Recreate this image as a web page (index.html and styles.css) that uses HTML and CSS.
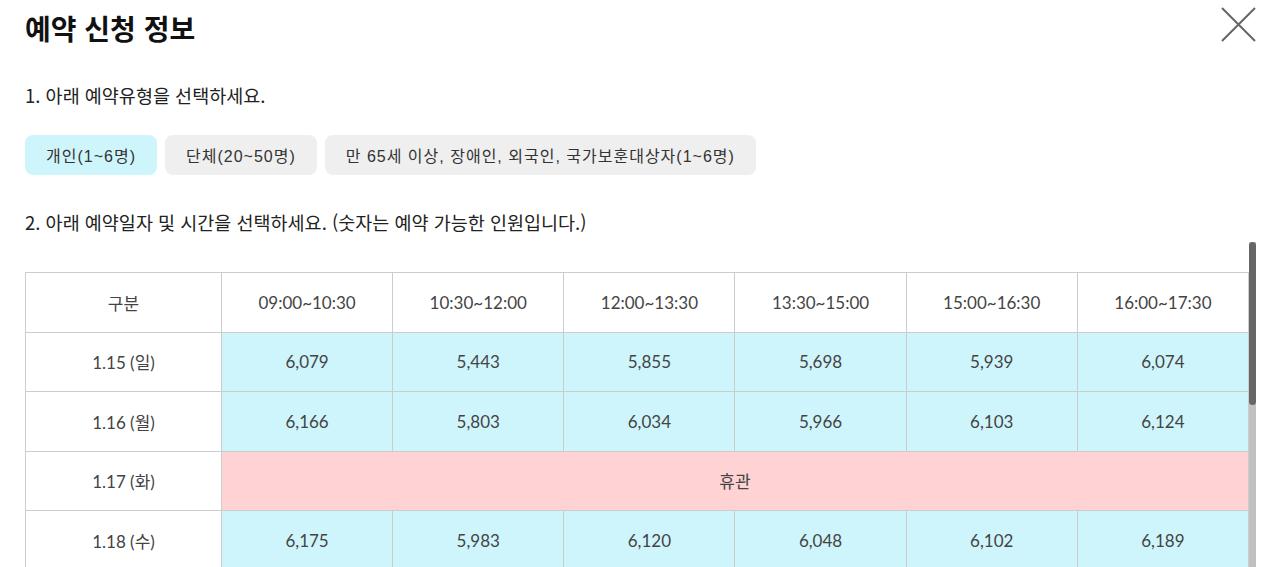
FILE: index.html
```html
<!DOCTYPE html>
<html lang="ko">
<head>
    <meta charset="UTF-8" />
    <meta name="viewport" content="width=device-width, initial-scale=1" />
    <title>예약 신청 정보</title>
    <link rel="stylesheet" href="styles.css">
</head>
<body>
    <div class="modal">
        <div class="modal-header">
            <h1>예약 신청 정보</h1>
            <button class="close" aria-label="닫기">
                <svg width="35" height="35" viewBox="0 0 35 35">
                    <path d="M1 1 L34 34 M34 1 L1 34" stroke="#666" stroke-width="2" fill="none" />
                </svg>
            </button>
        </div>

        <p class="step step-1">1. 아래 예약유형을 선택하세요.</p>
        <div class="type-list">
            <button class="type active">개인(1~6명)</button>
            <button class="type">단체(20~50명)</button>
            <button class="type">만 65세 이상, 장애인, 외국인, 국가보훈대상자(1~6명)</button>
        </div>

        <p class="step step-2">2. 아래 예약일자 및 시간을 선택하세요. (숫자는 예약 가능한 인원입니다.)</p>

        <div class="schedule">
            <div class="schedule-body">
                <table>
                    <colgroup>
                        <col class="col-date" />
                        <col /><col /><col /><col /><col /><col />
                    </colgroup>
                    <thead>
                        <tr>
                            <th>구분</th>
                            <th>09:00~10:30</th>
                            <th>10:30~12:00</th>
                            <th>12:00~13:30</th>
                            <th>13:30~15:00</th>
                            <th>15:00~16:30</th>
                            <th>16:00~17:30</th>
                        </tr>
                    </thead>
                    <tbody>
                        <tr>
                            <td class="date">1.15 (일)</td>
                            <td class="open">6,079</td><td class="open">5,443</td><td class="open">5,855</td>
                            <td class="open">5,698</td><td class="open">5,939</td><td class="open">6,074</td>
                        </tr>
                        <tr>
                            <td class="date">1.16 (월)</td>
                            <td class="open">6,166</td><td class="open">5,803</td><td class="open">6,034</td>
                            <td class="open">5,966</td><td class="open">6,103</td><td class="open">6,124</td>
                        </tr>
                        <tr>
                            <td class="date">1.17 (화)</td>
                            <td class="closed" colspan="6">휴관</td>
                        </tr>
                        <tr>
                            <td class="date">1.18 (수)</td>
                            <td class="open">6,175</td><td class="open">5,983</td><td class="open">6,120</td>
                            <td class="open">6,048</td><td class="open">6,102</td><td class="open">6,189</td>
                        </tr>
                        <tr>
                            <td class="date">1.19 (목)</td>
                            <td class="open">6,201</td><td class="open">6,012</td><td class="open">6,087</td>
                            <td class="open">6,134</td><td class="open">6,155</td><td class="open">6,210</td>
                        </tr>
                    </tbody>
                </table>
            </div>
            <div class="scrollbar">
                <div class="scrollbar-thumb"></div>
            </div>
        </div>
    </div>
</body>
</html>
```

FILE: styles.css
```css
body {
    margin: 0;
    background-color: #fff;
    color: #222;
    font-family: "Noto Sans CJK KR", "Noto Sans", sans-serif;
    overflow: hidden;
}
.modal {
    padding: 7px 24px 0 25px;
    height: 567px;
    box-sizing: border-box;
    display: flex;
    flex-direction: column;
}
.modal-header {
    display: flex;
    justify-content: space-between;
    align-items: flex-start;
}
.modal-header h1 {
    margin: 3px 0 0;
    font-size: 28px;
    line-height: 36px;
    font-weight: 700;
    color: #111;
}
.close {
    width: 35px;
    height: 35px;
    padding: 0;
    border: none;
    background: none;
    cursor: pointer;
}
.close svg {
    display: block;
}
.step {
    margin: 0;
    font-size: 18.5px;
    line-height: 24px;
    color: #222;
}
.step-1 {
    margin-top: 37px;
}
.step-2 {
    margin-top: 35px;
}
.type-list {
    display: flex;
    gap: 8px;
    margin-top: 28px;
}
.type {
    height: 40px;
    padding: 0 21px;
    font-family: "Liberation Sans", "Noto Sans CJK KR", sans-serif;
    font-size: 16px;
    letter-spacing: 1px;
    color: #333;
    background-color: #efefef;
    border: none;
    border-radius: 8px;
    cursor: pointer;
}
.type.active {
    background-color: #cff5fc;
}
.schedule {
    margin-top: 8px;
    flex: 1;
    min-height: 0;
    display: flex;
}
.schedule-body {
    flex: 1;
    min-width: 0;
    overflow: hidden;
    padding-top: 30px;
}
.scrollbar {
    width: 7px;
    flex-shrink: 0;
    background-color: #c1c1c1;
}
.scrollbar-thumb {
    height: 163px;
    background-color: #666;
    border-radius: 4px;
}
table {
    width: 100%;
    border-collapse: collapse;
    table-layout: fixed;
    font-family: Lato, "Noto Sans CJK KR", sans-serif;
    font-size: 17px;
    color: #444;
}
.col-date {
    width: 196px;
}
th, td {
    height: 58.5px;
    padding: 0;
    text-align: center;
    border: 1px solid #ccc;
    font-weight: 400;
}
td.open {
    background-color: #cff5fc;
}
td.closed {
    background-color: #ffd3d3;
}
```
